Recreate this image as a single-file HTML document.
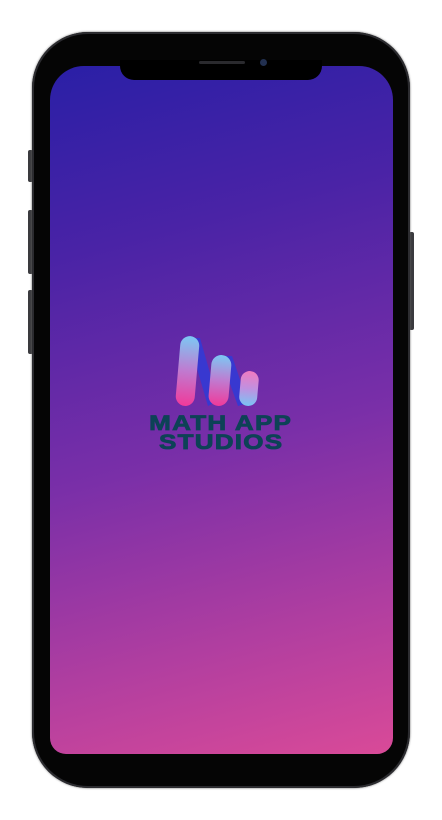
<!DOCTYPE html>
<html><head><style>
body{margin:0;width:442px;height:820px;background:#fff;position:relative;overflow:hidden;font-family:"Liberation Sans",sans-serif}
.btn{position:absolute;background:#3a3a3e;border-radius:2px}
.phone{position:absolute;left:32px;top:32px;width:378px;height:756px;border-radius:56px;background:#050505;box-shadow:0 0 0 2px #2c2c30 inset,0 0 2px #666}
.screen{position:absolute;left:50px;top:66px;width:343px;height:688px;border-radius:34px 34px 16px 16px;background:linear-gradient(165deg,#2a1fa6 0%,#4a23a6 25%,#7a2fa8 55%,#b03ea0 80%,#d94a98 100%);overflow:hidden}
.notch{position:absolute;left:120px;top:60px;width:202px;height:20px;background:#000;border-radius:0 0 14px 14px}
.spk{position:absolute;left:199px;top:61px;width:46px;height:3px;border-radius:2px;background:#2a2a2e}
.cam{position:absolute;left:260px;top:59px;width:7px;height:7px;border-radius:50%;background:#223050}
.t{position:absolute;left:0;width:442px;text-align:center;line-height:20px}
.t span{display:inline-block;color:#0d4256;font-weight:900;font-size:21px;letter-spacing:1px;transform:scaleX(1.24);-webkit-text-stroke:0.8px #0d4256}
</style></head><body>
<div class="btn" style="left:28px;top:150px;width:5px;height:32px"></div>
<div class="btn" style="left:28px;top:210px;width:5px;height:64px"></div>
<div class="btn" style="left:28px;top:290px;width:5px;height:64px"></div>
<div class="btn" style="left:409px;top:232px;width:5px;height:98px"></div>
<div class="phone"></div>
<div class="screen"></div>
<div class="notch"></div><div class="spk"></div><div class="cam"></div>
<svg style="position:absolute;left:170px;top:333px" width="95" height="76" viewBox="0 0 95 76">
<defs>
<linearGradient id="g" x1="0" y1="0" x2="0" y2="1"><stop offset="0" stop-color="#7cc8f4"/><stop offset="0.5" stop-color="#c07ad0"/><stop offset="1" stop-color="#f03a9a"/></linearGradient>
<linearGradient id="g2" x1="0" y1="0" x2="0" y2="1"><stop offset="0" stop-color="#f07ac0"/><stop offset="0.5" stop-color="#c090e0"/><stop offset="1" stop-color="#7ac4f4"/></linearGradient>
</defs>
<path d="M18 5 L30 5 L48 68 L38 73 Z" fill="#3838d0"/>
<path d="M50 23 L62 23 L78 70 L68 73 Z" fill="#3838d0"/>
<rect x="8" y="3" width="19" height="70" rx="9.5" fill="url(#g)" transform="rotate(5 17 38)"/>
<rect x="40" y="22" width="20" height="51" rx="10" fill="url(#g)" transform="rotate(5 50 47)"/>
<rect x="70" y="38" width="18" height="35" rx="9" fill="url(#g2)" transform="rotate(5 79 55)"/>
</svg>
<div class="t" style="top:414px"><span>MATH APP</span></div>
<div class="t" style="top:433px"><span>STUDIOS</span></div>
</body></html>
